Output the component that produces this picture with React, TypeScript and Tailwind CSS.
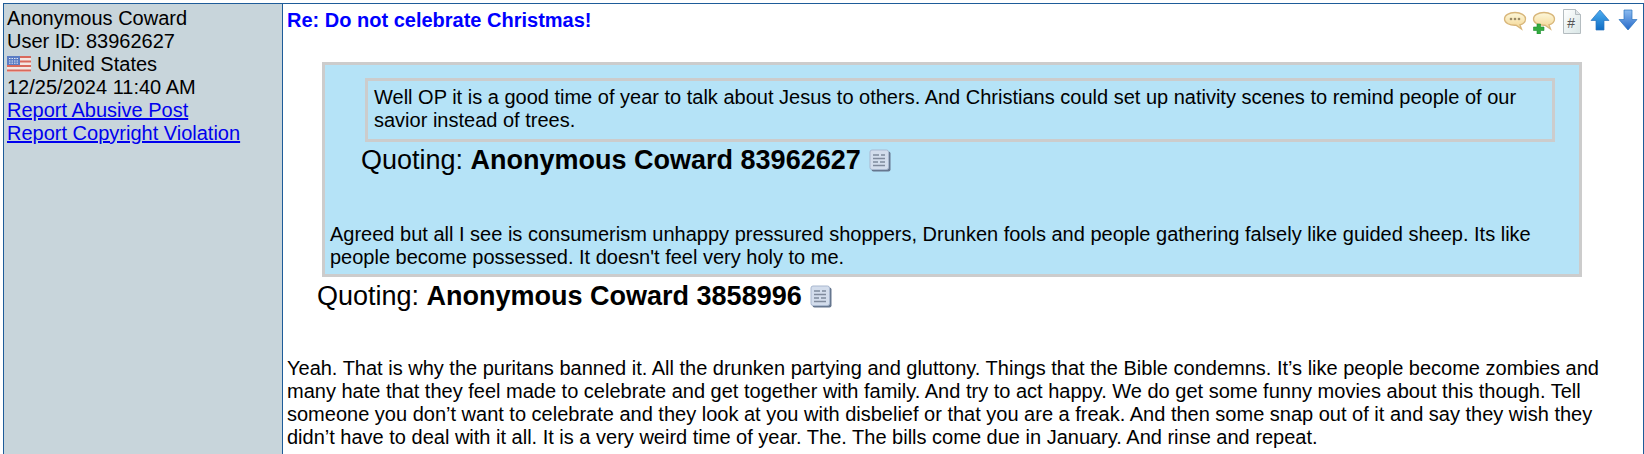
import React from 'react';

const Bubble = ({ plus }: { plus?: boolean }) => (
  <svg width="24" height="25" viewBox="0 0 24 25" className="shrink-0">
    <defs>
      <linearGradient id={plus ? 'bubbleB' : 'bubbleA'} x1="0" y1="0" x2="0" y2="1">
        <stop offset="0" stopColor="#fdf8dc" />
        <stop offset="1" stopColor="#f3d48f" />
      </linearGradient>
    </defs>
    <path
      d="M12 3.500c6 0 10.500 2.700 10.500 6.500 0 2.800-2.300 5-5.600 5.800l1.600 4.200-5.500-3.800C6.500 16.500 1.500 14 1.500 10c0-3.800 4.500-6.500 10.500-6.500z"
      fill={`url(#${plus ? 'bubbleB' : 'bubbleA'})`}
      stroke="#d8b67a"
      strokeWidth="1.300"
    />
    {plus ? (
      <path d="M5 15h3.500v3H12v3.500H8.500V25H5v-3.500H1.500V18H5z" fill="#33ab3f" stroke="#1f8f30" strokeWidth="0.6" />
    ) : (
      <g fill="#9a8a66">
        <circle cx="8" cy="10" r="1.300" />
        <circle cx="12" cy="10" r="1.300" />
        <circle cx="16" cy="10" r="1.300" />
      </g>
    )}
  </svg>
);

const HashDoc = () => (
  <svg width="20" height="25" viewBox="0 0 20 25" className="ml-[6px] shrink-0">
    <defs>
      <linearGradient id="docFill" x1="0" y1="0" x2="1" y2="1">
        <stop offset="0" stopColor="#ffffff" />
        <stop offset="1" stopColor="#d9e6e6" />
      </linearGradient>
    </defs>
    <path d="M1.500 .5h12l5 5v19h-17z" fill="url(#docFill)" stroke="#b4bcc0" />
    <path d="M13.500 .5v5h5" fill="#dfe5e8" stroke="#b4bcc0" />
    <text x="5" y="19" fontSize="14" fontStyle="italic" fill="#555" fontFamily="Liberation Sans, sans-serif">#</text>
  </svg>
);

const Arrow = ({ down, id }: { down?: boolean; id: string }) => (
  <svg width="20" height="22" viewBox="0 0 20 22" className="ml-[8px] shrink-0">
    <defs>
      <linearGradient id={id} x1="0" y1="0" x2="0" y2="1">
        <stop offset="0" stopColor={down ? '#8dbcf0' : '#4fb0f2'} />
        <stop offset="1" stopColor={down ? '#2468c8' : '#0f6cc4'} />
      </linearGradient>
    </defs>
    <path
      d={down ? 'M6 1h8v9.500h5l-9 10.500-9-10.500h5z' : 'M10 1l9 10.500h-5V21H6v-9.500H1z'}
      fill={`url(#${id})`}
      stroke="#2a72bd"
      strokeWidth="0.7"
    />
  </svg>
);

const QuoteDoc = () => (
  <svg width="22" height="23" viewBox="0 0 22 23" className="inline-block ml-[8px] align-[-3px]">
    <rect x="2.500" y="2.500" width="19" height="20" rx="2" fill="#66778f" />
    <rect x="1" y="1" width="18.500" height="19.500" rx="2" fill="#d3ddec" stroke="#a9b8cf" />
    <path d="M4 6h6M12 6h4M4 9.500h12M4 13h5M11 13h5M4 16.500h12" stroke="#7f8a9c" strokeWidth="1.300" />
  </svg>
);

const Flag = () => (
  <svg width="24" height="16" viewBox="0 0 24 16" className="inline-block align-[-1px] mr-[6px]">
    <rect width="24" height="16" fill="#f4e6e2" />
    <path d="M0 1h24M0 5.500h24M0 10h24M0 14.500h24" stroke="#d9695c" strokeWidth="2" />
    <rect width="13" height="9" fill="#5a7cc4" />
    <path d="M2 2.500h9M2 5h9M2 7.200h9" stroke="#dfe7f5" strokeWidth="1" strokeDasharray="1.500 1" />
  </svg>
);

const Quoting = ({ name, className }: { name: string; className: string }) => (
  <div className={`text-[27px] leading-[31px] ${className}`}>
    Quoting: <b>{name}</b>
    <QuoteDoc />
  </div>
);

export default function App() {
  return (
    <div className="h-[454px] overflow-hidden bg-white pt-[3px] pl-[3px] text-[20px] leading-[23px] text-black font-['Liberation_Sans',Arial,sans-serif]">
      <div className="flex h-[451px] border-t border-l border-r border-[#1e5c99]">
        <div className="w-[279px] shrink-0 border-r border-[#1e5c99] bg-[#c8d5db] pl-[3px] pt-[3px]">
          <div>Anonymous Coward</div>
          <div>User ID: 83962627</div>
          <div>
            <Flag />
            United States
          </div>
          <div>12/25/2024 11:40 AM</div>
          <div>
            <a href="#" className="text-[#0000ee] underline">Report Abusive Post</a>
          </div>
          <div>
            <a href="#" className="text-[#0000ee] underline">Report Copyright Violation</a>
          </div>
        </div>
        <div className="flex-1 pl-[4px] pr-[5px] pt-[5px]">
          <div className="flex items-start">
            <b className="flex-1 text-[#0000ff]">Re: Do not celebrate Christmas!</b>
            <Bubble />
            <div className="ml-[5px] flex">
              <Bubble plus />
            </div>
            <HashDoc />
            <Arrow id="arrowUp" />
            <Arrow down id="arrowDown" />
          </div>
          <div className="mt-[28px] ml-[35px] w-[1260px] border-[3px] border-[#cccccc] bg-[#b5e3f7] pt-[13px] pb-[5px] pl-[5px]">
            <div className="ml-[35px] w-[1190px] border-[3px] border-[#cccccc] px-[6px] pt-[5px] pb-[7px]">
              Well OP it is a good time of year to talk about Jesus to others. And Christians could set up nativity scenes to remind people of our savior instead of trees.
            </div>
            <Quoting name="Anonymous Coward 83962627" className="ml-[31px] mt-[3px]" />
            <p className="mt-[47px] pr-[6px]">
              Agreed but all I see is consumerism unhappy pressured shoppers, Drunken fools and people gathering falsely like guided sheep. Its like people become possessed. It doesn't feel very holy to me.
            </p>
          </div>
          <Quoting name="Anonymous Coward 3858996" className="ml-[30px] mt-[4px]" />
          <p className="mt-[45px]">
            Yeah. That is why the puritans banned it. All the drunken partying and gluttony. Things that the Bible condemns. It’s like people become zombies and many hate that they feel made to celebrate and get together with family. And try to act happy. We do get some funny movies about this though. Tell someone you don’t want to celebrate and they look at you with disbelief or that you are a freak. And then some snap out of it and say they wish they didn’t have to deal with it all. It is a very weird time of year. The. The bills come due in January. And rinse and repeat.
          </p>
        </div>
      </div>
    </div>
  );
}
